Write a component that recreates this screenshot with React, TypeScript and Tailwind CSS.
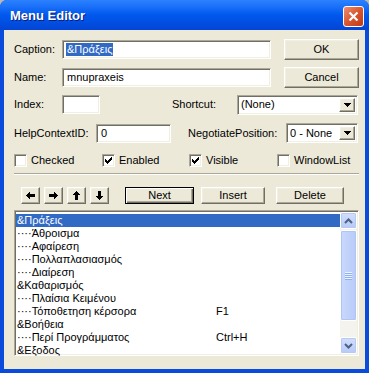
import React from "react";

const sunken =
  "border border-t-[#ACA899] border-l-[#ACA899] border-b-white border-r-white shadow-[inset_1px_1px_0_#716F64,inset_-1px_-1px_0_#F1EFE2] bg-white";
const raised =
  "border border-t-white border-l-white border-b-[#716F64] border-r-[#716F64] shadow-[inset_-1px_-1px_0_#ACA899,inset_1px_1px_0_#F1EFE2] bg-[#ECE9D8]";

const items = [
  { name: "&Πράξεις", key: "", selected: true },
  { name: "····Άθροισμα", key: "" },
  { name: "····Αφαίρεση", key: "" },
  { name: "····Πολλαπλασιασμός", key: "" },
  { name: "····Διαίρεση", key: "" },
  { name: "&Καθαρισμός", key: "" },
  { name: "····Πλαίσια Κειμένου", key: "" },
  { name: "····Τόποθετηση κέρσορα", key: "F1" },
  { name: "&Βοήθεια", key: "" },
  { name: "····Περί Προγράμματος", key: "Ctrl+H" },
  { name: "&Εξοδος", key: "" },
];

function Combo({ value, width }: { value: string; width: string }) {
  return (
    <div className={`${sunken} ${width} h-[20px] flex items-center p-[2px]`}>
      <span className="flex-1 pl-[1px] leading-none">{value}</span>
      <div className={`${raised} w-[16px] h-full flex items-center justify-center`}>
        <svg width="7" height="4" viewBox="0 0 7 4" shapeRendering="crispEdges">
          <path d="M0 0h7v1H0zM1 1h5v1H1zM2 2h3v1H2zM3 3h1v1H3z" fill="#000" />
        </svg>
      </div>
    </div>
  );
}

function Check({ label, checked }: { label: string; checked?: boolean }) {
  return (
    <div className="flex items-center">
      <div className={`${sunken} w-[13px] h-[13px] flex items-center justify-center`}>
        {checked && (
          <svg width="7" height="7" viewBox="0 0 7 7" shapeRendering="crispEdges">
            <path
              d="M6 0h1v1H6zM5 1h2v1H5zM0 2h1v1H0zM4 2h3v1H4zM0 3h2v1H0zM3 3h3v1H3zM0 4h5v1H0zM1 5h3v1H1zM2 6h1v1H2z"
              fill="#000"
            />
          </svg>
        )}
      </div>
      <span className="ml-[4px]">{label}</span>
    </div>
  );
}

function ArrowBtn({ d }: { d: string }) {
  return (
    <div className={`${raised} w-[19px] h-[17px] flex items-center justify-center`}>
      <svg width="9" height="9" viewBox="0 0 9 9" shapeRendering="crispEdges">
        <path d={d} fill="#000" />
      </svg>
    </div>
  );
}

function ScrollBtn({ up }: { up?: boolean }) {
  return (
    <div className="h-[17px] rounded-[2px] border border-white bg-gradient-to-b from-[#D2DEFC] to-[#B6CAF7] shadow-[inset_0_0_0_1px_#B7C9F3] flex items-center justify-center">
      <svg width="9" height="6" viewBox="0 0 9 6">
        <path
          d={up ? "M1 5 L4.5 1.5 L8 5" : "M1 1 L4.5 4.5 L8 1"}
          stroke="#4D6185"
          strokeWidth="2"
          fill="none"
        />
      </svg>
    </div>
  );
}

export default function App() {
  return (
    <div
      className="w-[369px] h-[373px] bg-[#b9b9b9] text-[11px] text-black"
      style={{ fontFamily: '"Liberation Sans", Arial, sans-serif' }}
    >
      <div className="w-full h-full flex flex-col rounded-t-[7px] bg-[#0A4BDC] overflow-hidden">
        {/* title bar */}
        <div className="h-[30px] shrink-0 flex items-center justify-between pl-[10px] pr-[5px] pt-[2px] bg-gradient-to-b from-[#2C82FF] via-[#0058EE] to-[#0345D4]">
          <span className="text-white font-bold text-[13px] [text-shadow:1px_1px_0_#0A1E78]">
            Menu Editor
          </span>
          <div className="w-[21px] h-[21px] rounded-[3px] border border-white bg-gradient-to-br from-[#EC8C6E] via-[#D9562F] to-[#BD3A14] flex items-center justify-center">
            <svg width="11" height="11" viewBox="0 0 11 11">
              <path d="M1.5 1.5 L9.5 9.5 M9.5 1.5 L1.5 9.5" stroke="#fff" strokeWidth="2.2" />
            </svg>
          </div>
        </div>

        {/* client */}
        <div className="flex-1 mx-[4px] mb-[4px] bg-[#ECE9D8] pl-[10px] flex flex-col">
          <div className="flex items-center h-[21px] mt-[9px]">
            <span className="w-[48px]">Caption:</span>
            <div className={`${sunken} w-[209px] h-[19px] flex items-center pl-[3px]`}>
              <span className="bg-[#316AC5] text-white leading-[13px] px-[1px]">&Πράξεις</span>
            </div>
            <div className={`${raised} ml-[13px] w-[75px] h-[21px] flex items-center justify-center`}>OK</div>
          </div>

          <div className="flex items-center h-[21px] mt-[7px]">
            <span className="w-[48px]">Name:</span>
            <div className={`${sunken} w-[209px] h-[19px] flex items-center pl-[4px]`}>mnupraxeis</div>
            <div className={`${raised} ml-[13px] w-[75px] h-[21px] flex items-center justify-center`}>Cancel</div>
          </div>

          <div className="flex items-center h-[19px] mt-[7px]">
            <span className="w-[48px]">Index:</span>
            <div className={`${sunken} w-[38px] h-[19px]`} />
            <span className="ml-[72px] w-[65px]">Shortcut:</span>
            <Combo value="(None)" width="w-[121px]" />
          </div>

          <div className="flex items-center h-[20px] mt-[9px]">
            <span className="w-[82px]">HelpContextID:</span>
            <div className={`${sunken} w-[75px] h-[19px] flex items-center pl-[4px]`}>0</div>
            <span className="ml-[17px] w-[98px]">NegotiatePosition:</span>
            <Combo value="0 - None" width="w-[72px]" />
          </div>

          <div className="grid grid-cols-[88px_87px_88px_1fr] h-[13px] mt-[9px]">
            <Check label="Checked" />
            <Check label="Enabled" checked />
            <Check label="Visible" checked />
            <Check label="WindowList" />
          </div>

          <div className="mt-[8px] w-[345px] h-[2px] border-t border-t-[#ACA899] border-b border-b-white" />

          <div className="flex items-center h-[17px] mt-[12px] pl-[7px]">
            <div className="flex gap-[4px]">
              <ArrowBtn d="M0 4h1v1H0zM1 3h1v3H1zM2 2h1v5H2zM3 1h1v7H3zM4 3h5v3H4z" />
              <ArrowBtn d="M8 4h1v1H8zM7 3h1v3H7zM6 2h1v5H6zM5 1h1v7H5zM0 3h5v3H0z" />
              <ArrowBtn d="M4 0h1v1H4zM3 1h3v1H3zM2 2h5v1H2zM1 3h7v1H1zM3 4h3v5H3z" />
              <ArrowBtn d="M4 8h1v1H4zM3 7h3v1H3zM2 6h5v1H2zM1 5h7v1H1zM3 0h3v5H3z" />
            </div>
            <div className="ml-[16px] w-[69px] h-[17px] border border-black bg-[#ECE9D8] shadow-[inset_1px_1px_0_#fff,inset_-1px_-1px_0_#716F64,inset_-2px_-2px_0_#ACA899] flex items-center justify-center">
              Next
            </div>
            <div className={`${raised} ml-[7px] w-[64px] h-[17px] flex items-center justify-center`}>Insert</div>
            <div className={`${raised} ml-[11px] w-[68px] h-[17px] flex items-center justify-center`}>Delete</div>
          </div>

          <div className={`${sunken} mt-[6px] w-[345px] h-[146px] p-[1px] flex`}>
            <div className="flex-1 pt-[2px]">
              {items.map((it) => (
                <div
                  key={it.name}
                  className={`grid grid-cols-[199px_1fr] h-[13px] leading-[13px] pl-[1px] ${
                    it.selected ? "bg-[#316AC5] text-white" : ""
                  }`}
                >
                  <span className="whitespace-nowrap">{it.name}</span>
                  <span>{it.key}</span>
                </div>
              ))}
            </div>
            <div className="w-[17px] bg-[#F4F3EE] flex flex-col">
              <ScrollBtn up />
              <div className="flex-1 pt-[1px]">
                <div className="h-[91px] rounded-[2px] border border-white bg-gradient-to-r from-[#C9D8FC] to-[#B8CBF8] shadow-[inset_0_0_0_1px_#B1C5F4] flex items-center justify-center">
                  <svg width="7" height="8" viewBox="0 0 7 8" shapeRendering="crispEdges">
                    <path d="M0 0h7v1H0zM0 2h7v1H0zM0 4h7v1H0zM0 6h7v1H0z" fill="#EEF4FE" />
                    <path d="M0 1h7v1H0zM0 3h7v1H0zM0 5h7v1H0zM0 7h7v1H0z" fill="#8CB0F8" />
                  </svg>
                </div>
              </div>
              <ScrollBtn />
            </div>
          </div>
        </div>
      </div>
    </div>
  );
}
